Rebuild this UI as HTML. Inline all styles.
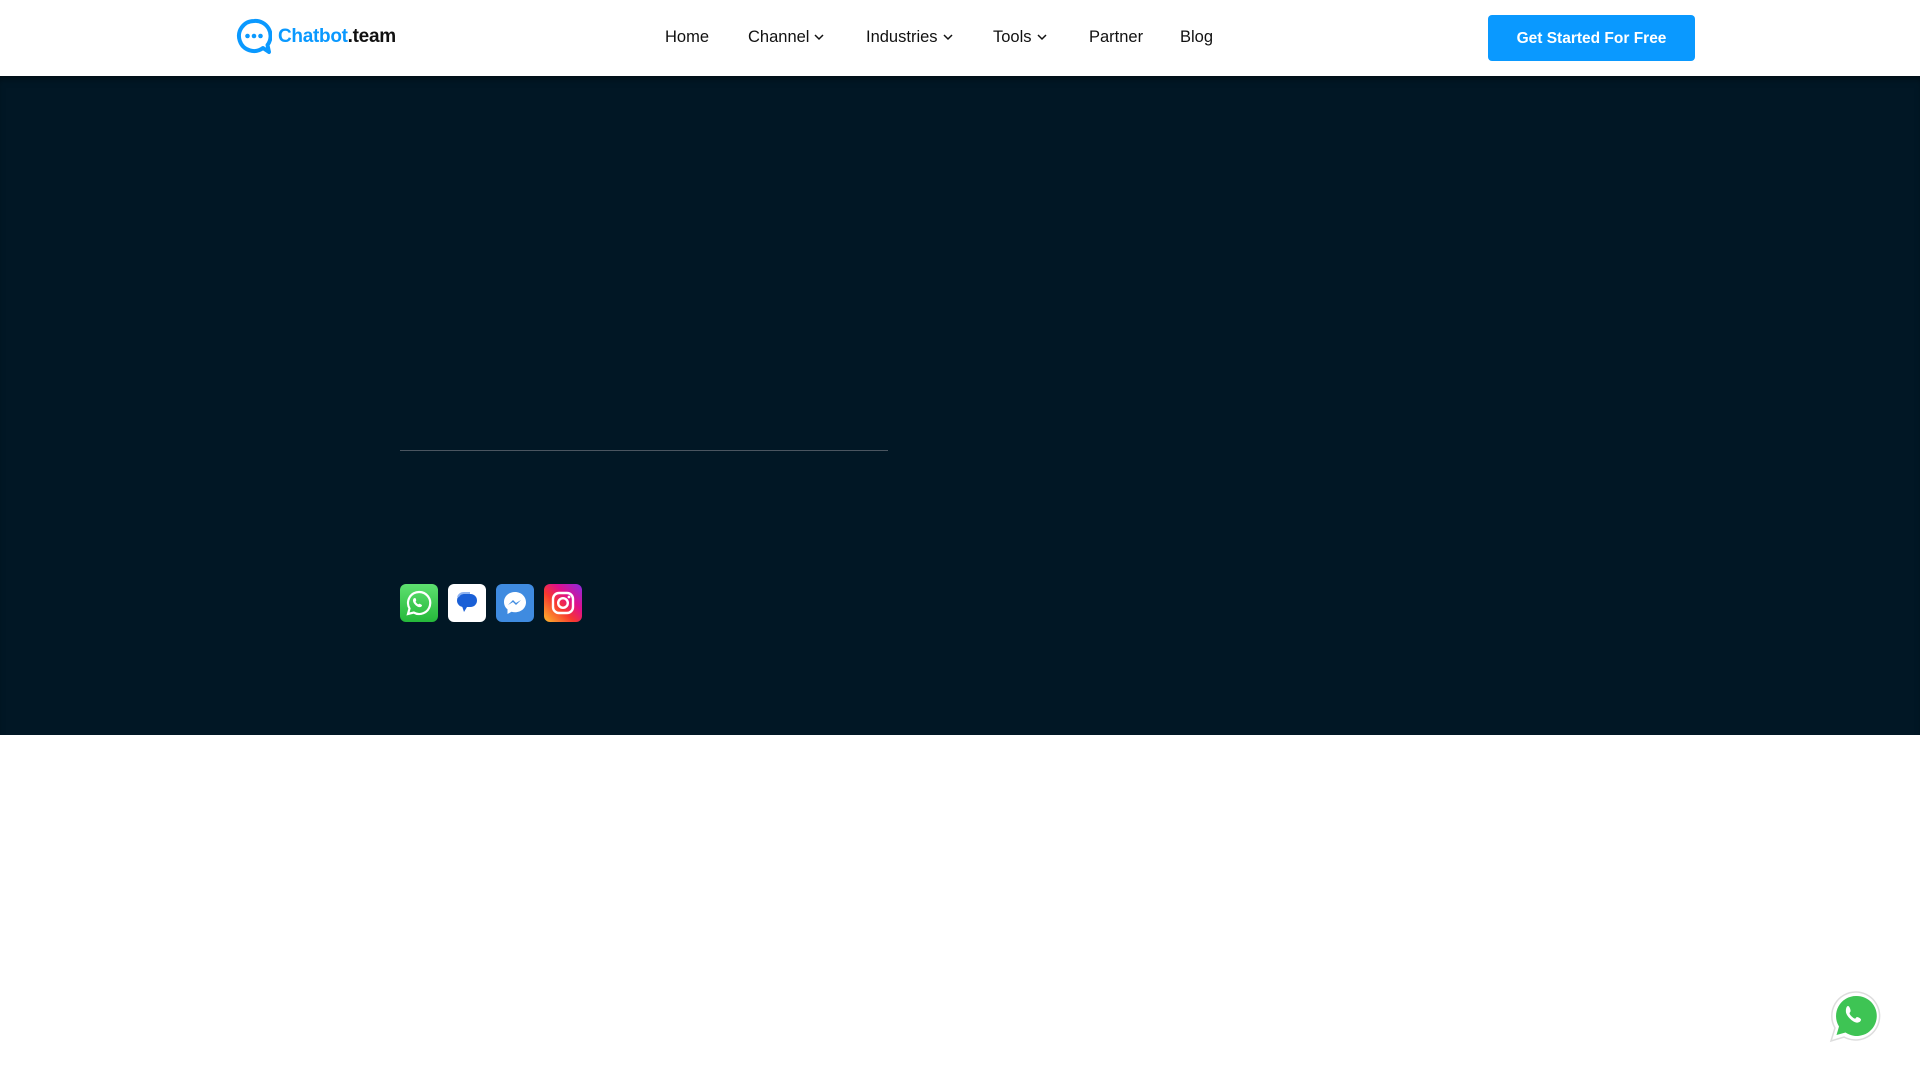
<!DOCTYPE html>
<html><head><meta charset="utf-8"><style>
*{margin:0;padding:0;box-sizing:border-box}
body{width:1920px;height:1080px;background:#fff;font-family:"Liberation Sans",Arial,sans-serif;position:relative;overflow:hidden}
.nav{position:absolute;left:0;top:0;width:1920px;height:76px;background:#fff}
.logo{position:absolute;left:236px;top:18px;display:flex;align-items:center}
.logo span{font-weight:bold;font-size:19px;margin-left:6px;letter-spacing:-0.3px}
.item{position:absolute;top:28px;font-size:16.5px;color:#111}
.item svg{margin-left:5px;vertical-align:middle}
.btn{position:absolute;left:1488px;top:15px;width:207px;height:46px;background:#0a99ff;border-radius:4px;color:#fff;font-weight:bold;font-size:15.5px;text-align:center;line-height:47px}
.hero{position:absolute;left:0;top:76px;width:1920px;height:659px;background:#011725;box-shadow:inset 0 6px 8px -4px rgba(0,0,0,.5)}
.line{position:absolute;left:400px;top:450px;width:488px;height:1px;background:#4a5560}
.ic{position:absolute;top:584px;width:38px;height:38px;border-radius:6px}
</style></head><body>
<div class="nav">
 <div class="logo">
  <svg width="36" height="38" viewBox="0 0 36 38"><path d="M18 3a15 15 0 1 0 9 27l6 4-1.5-7A15 15 0 0 0 18 3z" fill="none" stroke="#0a99ff" stroke-width="4" stroke-linejoin="round"/><circle cx="11.5" cy="18" r="2.3" fill="#0a99ff"/><circle cx="18" cy="18" r="2.3" fill="#0a99ff"/><circle cx="24.5" cy="18" r="2.3" fill="#0a99ff"/></svg>
  <span><span style="color:#0a99ff;margin:0">Chatbot</span><span style="color:#111;margin:0">.team</span></span>
 </div>
 <div class="item" style="left:665px">Home</div>
 <div class="item" style="left:748px">Channel<svg width="10" height="7" viewBox="0 0 10 7"><path d="M1 1l4 4 4-4" fill="none" stroke="#111" stroke-width="1.5"/></svg></div>
 <div class="item" style="left:866px">Industries<svg width="10" height="7" viewBox="0 0 10 7"><path d="M1 1l4 4 4-4" fill="none" stroke="#111" stroke-width="1.5"/></svg></div>
 <div class="item" style="left:993px">Tools<svg width="10" height="7" viewBox="0 0 10 7"><path d="M1 1l4 4 4-4" fill="none" stroke="#111" stroke-width="1.5"/></svg></div>
 <div class="item" style="left:1089px">Partner</div>
 <div class="item" style="left:1180px">Blog</div>
 <div class="btn">Get Started For Free</div>
</div>
<div class="hero"></div>
<div class="line"></div>
<div class="ic" style="left:400px;background:linear-gradient(#5ee070,#25b83a)"><svg width="38" height="38" viewBox="0 0 38 38"><path d="M19 8a11 11 0 0 0-9.5 16.5L8 30l5.7-1.5A11 11 0 1 0 19 8z" fill="none" stroke="#fff" stroke-width="2.2"/><path d="M15 14c1 0 1.5 2.5 1 3s-.5 1 .5 2 1.5 1.5 2.5 1 1 0 3 1c0 2-2 2.5-3.5 2s-4-2.5-5-4.5-.5-4.5 1.5-4.5z" fill="#fff"/></svg></div>
<div class="ic" style="left:448px;background:#fff"><svg width="38" height="38" viewBox="0 0 38 38"><rect x="9" y="10" width="20" height="13" rx="6.5" fill="#1a5fd6"/><path d="M14 22l2 6 3-5z" fill="#1a5fd6"/><path d="M10 13a6 6 0 0 1 6-4h6" stroke="#8fb3f0" stroke-width="2" fill="none"/></svg></div>
<div class="ic" style="left:496px;background:#3f8be0"><svg width="38" height="38" viewBox="0 0 38 38"><path d="M19 8c-6.5 0-11 4.5-11 10 0 3 1.3 5.5 3.5 7.3V30l4-2.2c1.1.3 2.300.5 3.5.5 6.5 0 11-4.5 11-10S25.5 8 19 8z" fill="#fff"/><path d="M12 21l5-5 3 3 5-3-5 5-3-3z" fill="#3f8be0"/></svg></div>
<div class="ic" style="left:544px;background:linear-gradient(45deg,#fdb92c,#f7382f 40%,#e0108b 65%,#8a2be2)"><svg width="38" height="38" viewBox="0 0 38 38"><rect x="9" y="9" width="20" height="20" rx="6" fill="none" stroke="#fff" stroke-width="2.4"/><circle cx="19" cy="19" r="4.8" fill="none" stroke="#fff" stroke-width="2.4"/><circle cx="25" cy="13" r="1.4" fill="#fff"/></svg></div>
<svg style="position:absolute;left:1827px;top:989px" width="56" height="56" viewBox="0 0 56 56"><path d="M29 3a24 24 0 0 0-21 36L4 52l13-4A24 24 0 1 0 29 3z" fill="#fff" stroke="#ddd" stroke-width="1.5"/><path d="M29 7a20 20 0 0 0-17 30.5L9.5 46l9-2.5A20 20 0 1 0 29 7z" fill="#3ec454"/><path d="M21 17c1.5 0 3 4.5 2.5 5.5s-1.5 1.5-.5 3 3 3.5 4.5 4 1.5-1.5 2.5-1.5 4 1.5 4 2.5c0 2.5-3 3.5-5 3-4-1-9-6-10-10-.5-3 .5-6.5 2-6.5z" fill="#fff"/></svg>
</body></html>
